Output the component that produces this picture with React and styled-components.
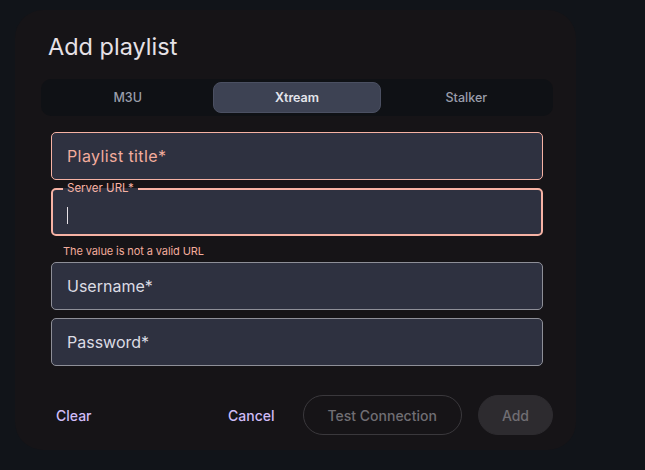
import React from "react";
import styled, { createGlobalStyle } from "styled-components";

const GlobalStyle = createGlobalStyle`
  html, body {
    margin: 0;
    padding: 0;
    background: #111419;
    font-family: Inter, "Noto Sans", sans-serif;
  }
`;

const Page = styled.div`
  width: 645px;
  height: 470px;
  padding: 10px 0 0 15px;
  box-sizing: border-box;
`;

const Dialog = styled.div`
  width: 561px;
  height: 440px;
  box-sizing: border-box;
  background: #161417;
  border-radius: 28px;
  padding: 20px 23px 0 26px;
  display: flex;
  flex-direction: column;
`;

const Title = styled.h2`
  margin: 0 0 0 7px;
  font-size: 23.5px;
  line-height: 34px;
  font-weight: 400;
  color: #e6e1e6;
`;

const Tabs = styled.div`
  margin-top: 15px;
  display: grid;
  grid-template-columns: repeat(3, 1fr);
  gap: 2px;
  padding: 3px;
  background: #0f1115;
  border-radius: 10px;
`;

const Tab = styled.button`
  height: 31px;
  border-radius: 8px;
  font-family: inherit;
  font-size: 12.5px;
  font-weight: ${(p) => (p.$active ? 600 : 500)};
  color: ${(p) => (p.$active ? "#e4e5ec" : "#9a9eab")};
  background: ${(p) => (p.$active ? "#3d4253" : "transparent")};
  border: 1px solid ${(p) => (p.$active ? "#4b5062" : "transparent")};
  cursor: pointer;
`;

const Form = styled.div`
  margin-top: 16px;
  padding: 0 10px;
  display: flex;
  flex-direction: column;
`;

const Field = styled.div`
  position: relative;
  height: 48px;
  box-sizing: border-box;
  background: #2e3140;
  border-radius: 5px;
  border: ${(p) => (p.$focused ? "2px" : "1px")} solid
    ${(p) => (p.$error ? "#f6b2a4" : "#8e8f98")};
  padding: 0 ${(p) => (p.$focused ? "14px" : "15px")};
  display: flex;
  align-items: center;
  margin-top: ${(p) => p.$mt || 0}px;
`;

const Placeholder = styled.span`
  font-size: 16px;
  color: ${(p) => (p.$error ? "#f3ac9d" : "#dcdce4")};
  letter-spacing: ${(p) => (p.$error ? "0.4px" : "0")};
`;

const Notch = styled.span`
  position: absolute;
  left: 10px;
  top: -9px;
  padding: 0 4px;
  font-size: 11.5px;
  line-height: 14px;
  color: #f6b2a4;
  background: linear-gradient(to bottom, #161417 50%, #2e3140 50%);
`;

const Caret = styled.span`
  width: 1px;
  height: 17px;
  background: #e6e1e6;
  margin-top: 6px;
`;

const Helper = styled.div`
  font-size: 11px;
  line-height: 14px;
  color: #f3ac9d;
  padding: 8px 0 4px 12px;
  letter-spacing: -0.1px;
`;

const Actions = styled.div`
  margin-top: 29px;
  display: flex;
  align-items: center;
  gap: 16px;
`;

const TextButton = styled.button`
  font-family: inherit;
  font-size: 14px;
  font-weight: 500;
  color: #cfbcf7;
  background: none;
  border: none;
  padding: 0 12px;
  margin-left: ${(p) => (p.$push ? "3px" : 0)};
  height: 40px;
  border-radius: 20px;
  cursor: pointer;
  margin-right: ${(p) => (p.$push ? "auto" : 0)};
`;

const PillButton = styled.button`
  font-family: inherit;
  font-size: 14px;
  font-weight: 500;
  height: 40px;
  border-radius: 20px;
  padding: 0 ${(p) => (p.$filled ? "23px" : "24px")};
  color: #706e73;
  background: ${(p) => (p.$filled ? "#2d2b2f" : "transparent")};
  border: 1px solid ${(p) => (p.$filled ? "#2d2b2f" : "#3a383c")};
`;

export default function App() {
  return (
    <>
      <GlobalStyle />
      <Page>
        <Dialog>
          <Title>Add playlist</Title>
          <Tabs>
            <Tab>M3U</Tab>
            <Tab $active>Xtream</Tab>
            <Tab>Stalker</Tab>
          </Tabs>
          <Form>
            <Field $error>
              <Placeholder $error>Playlist title*</Placeholder>
            </Field>
            <Field $error $focused $mt={8}>
              <Notch>Server URL*</Notch>
              <Caret />
            </Field>
            <Helper>The value is not a valid URL</Helper>
            <Field>
              <Placeholder>Username*</Placeholder>
            </Field>
            <Field $mt={8}>
              <Placeholder>Password*</Placeholder>
            </Field>
          </Form>
          <Actions>
            <TextButton $push>Clear</TextButton>
            <TextButton>Cancel</TextButton>
            <PillButton>Test Connection</PillButton>
            <PillButton $filled>Add</PillButton>
          </Actions>
        </Dialog>
      </Page>
    </>
  );
}
